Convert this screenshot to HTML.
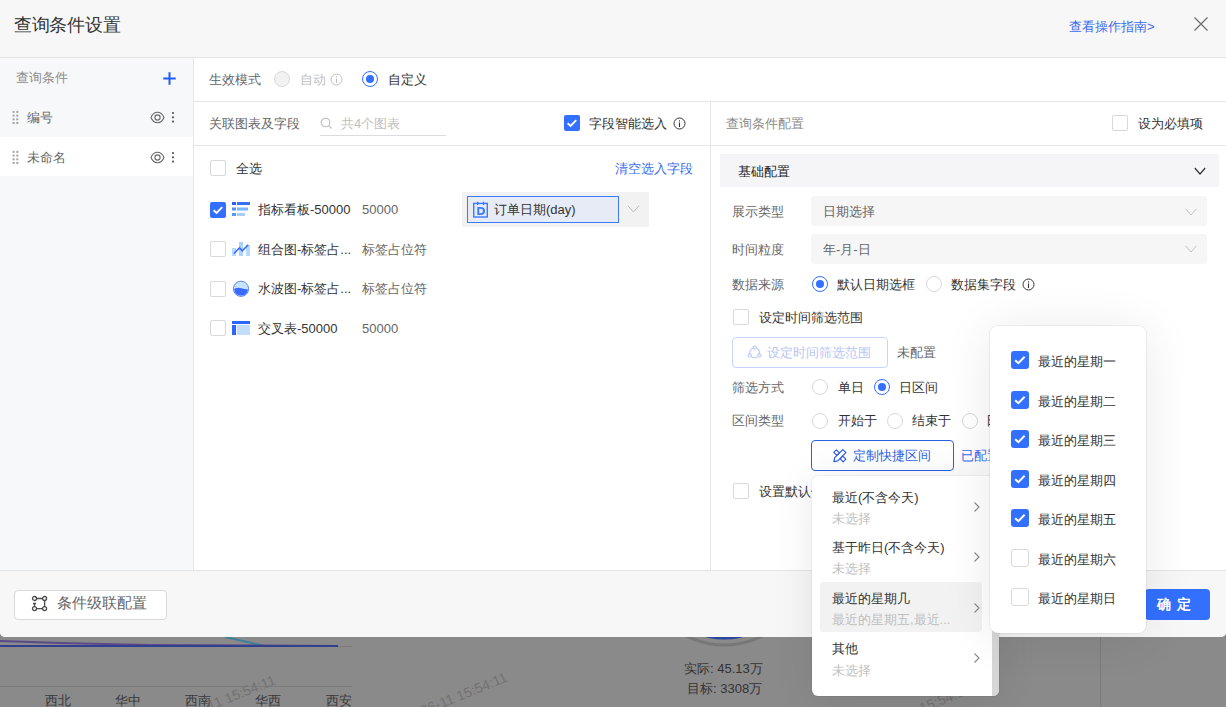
<!DOCTYPE html>
<html><head><meta charset="utf-8">
<style>
*{box-sizing:border-box;margin:0;padding:0}
html,body{width:1226px;height:707px;overflow:hidden;background:#8a8a8a;font-family:"Liberation Sans",sans-serif;font-size:13px;color:#333}
.a{position:absolute}
.t{position:absolute;white-space:nowrap;line-height:20px;height:20px;margin-top:1px}
#modal{position:absolute;left:0;top:0;width:1226px;height:637px;background:#fff;border-radius:0 0 5px 5px;overflow:hidden}
#hdr{position:absolute;left:0;top:0;width:1226px;height:58px;background:#f7f7f7;border-bottom:1px solid #e3e3e3}
#side{position:absolute;left:0;top:58px;width:194px;height:512px;background:#f7f8fa;border-right:1px solid #e6e6e6}
#footer{position:absolute;left:0;top:570px;width:1226px;height:67px;background:#f7f7f7;border-top:1px solid #e3e3e3}
.hl{position:absolute;height:1px;background:#e6e6e6}
.vl{position:absolute;width:1px;background:#e6e6e6}
.cb{position:absolute;width:16px;height:16px;border:1px solid #d9d9d9;border-radius:2px;background:#fff}
.cbc{position:absolute;width:16px;height:16px;border-radius:2px;background:#3370ff}
.cbc svg{position:absolute;left:0;top:0}
.rd{position:absolute;width:16px;height:16px;border:1px solid #d9d9d9;border-radius:50%;background:#fff}
.rdc{position:absolute;width:16px;height:16px;border:1px solid #3370ff;border-radius:50%;background:#fff}
.rdc:after{content:"";position:absolute;left:3px;top:3px;width:8px;height:8px;border-radius:50%;background:#3370ff}
.sel{position:absolute;background:#f6f6f6;border-radius:3px;height:30px}
.dk{color:#333}
.wm{color:#727272;font-size:14px;transform:rotate(-22deg);transform-origin:0 50%}
.gr{color:#999}
.md{color:#666}
</style></head><body>
<!-- background chart under overlay -->
<div class="a" style="left:0;top:636px;width:1226px;height:71px;background:#8a8a8a">
  
  <div class="a" style="left:1100px;top:0;width:1px;height:71px;background:#7a7a7a"></div>
  <div class="a" style="left:0;top:50px;width:352px;height:1px;background:#7c7c7c"></div>
  <svg class="a" style="left:0;top:1px" width="360" height="20" viewBox="0 0 360 20">
    <path d="M0 9.5 L352 9.5" stroke="#7a7a7a" stroke-width="1" fill="none"/>
    <path d="M225 0 L265 9" stroke="#3f7f9a" stroke-width="2" fill="none"/>
    <path d="M0 4 L60 6 L150 8 L338 9" stroke="#5a4a8a" stroke-width="2" fill="none"/>
    <path d="M0 9 L338 9" stroke="#323f8f" stroke-width="2" fill="none"/>
  </svg>
  <div class="t" style="left:45px;top:54px;color:#3a3a3a;font-size:13px">西北</div>
  <div class="t" style="left:115px;top:54px;color:#3a3a3a;font-size:13px">华中</div>
  <div class="t" style="left:185px;top:54px;color:#3a3a3a;font-size:13px">西南</div>
  <div class="t" style="left:255px;top:54px;color:#3a3a3a;font-size:13px">华西</div>
  <div class="t" style="left:326px;top:54px;color:#3a3a3a;font-size:13px">西安</div>
  <div class="t wm" style="left:208px;top:59px">11 15:54:11</div>
  <div class="t wm" style="left:421px;top:64px">26-11 15:54:11</div>
  <div class="t wm" style="left:884px;top:76px">26-11 15:54:11</div>
  <svg class="a" style="left:624px;top:0" width="200" height="12" viewBox="624 636 200 12"><circle cx="724.3" cy="561" r="84" stroke="#777" stroke-width="3" fill="none"/><circle cx="724.3" cy="561" r="78.5" fill="#2a479c"/></svg>
  <div class="t" style="left:684px;top:22px;color:#333;font-size:13px">实际: 45.13万</div>
  <div class="t" style="left:687px;top:42px;color:#333;font-size:13px">目标: 3308万</div>
</div>

<div id="modal">
  <div id="hdr">
    <div class="t" style="margin-top:0;left:14px;top:14px;font-size:18px;letter-spacing:-0.3px;line-height:22px;height:22px;color:#333">查询条件设置</div>
    <div class="t" style="left:1069px;top:16px;color:#3d6bf0">查看操作指南&gt;</div>
    <svg class="a" style="left:1193px;top:16px" width="16" height="16" viewBox="0 0 16 16"><path d="M1.5 1.5L14.5 14.5M14.5 1.5L1.5 14.5" stroke="#707070" stroke-width="1.3" fill="none"/></svg>
  </div>
  <div id="side">
    <div class="t gr" style="left:16px;top:9px;color:#8c8c8c">查询条件</div>
    <svg class="a" style="left:163px;top:14px" width="13" height="13" viewBox="0 0 13 13"><path d="M6.5 0.3V12.7M0.3 6.5H12.7" stroke="#1f5cff" stroke-width="2" fill="none"/></svg>
    <div class="a" style="left:0;top:79px;width:193px;height:39px;background:#fff"></div>
    <!-- row 1 -->
    <svg class="a" style="left:12px;top:52px" width="8" height="14" viewBox="0 0 8 14"><g fill="#a3a3a3"><rect x="0.6" y="0.9" width="2" height="2"/><rect x="4.3" y="0.9" width="2" height="2"/><rect x="0.6" y="4.6" width="2" height="2"/><rect x="4.3" y="4.6" width="2" height="2"/><rect x="0.6" y="8.3" width="2" height="2"/><rect x="4.3" y="8.3" width="2" height="2"/><rect x="0.6" y="12" width="2" height="2"/><rect x="4.3" y="12" width="2" height="2"/></g></svg>
    <div class="t md" style="left:27px;top:49px">编号</div>
    <svg class="a" style="left:150px;top:53px" width="15" height="13" viewBox="0 0 15 13"><path d="M1 6.5 C3.8 -0.5 11.2 -0.5 14 6.5 C11.2 13.5 3.8 13.5 1 6.5Z" stroke="#666" stroke-width="1.1" fill="none"/><circle cx="7.5" cy="6.5" r="2.6" stroke="#666" stroke-width="1.1" fill="none"/></svg>
    <svg class="a" style="left:171px;top:53px" width="4" height="12" viewBox="0 0 4 12"><g fill="#555"><circle cx="2" cy="2" r="1.1"/><circle cx="2" cy="6.3" r="1.1"/><circle cx="2" cy="10.6" r="1.1"/></g></svg>
    <!-- row 2 -->
    <svg class="a" style="left:12px;top:92px" width="8" height="14" viewBox="0 0 8 14"><g fill="#a3a3a3"><rect x="0.6" y="0.9" width="2" height="2"/><rect x="4.3" y="0.9" width="2" height="2"/><rect x="0.6" y="4.6" width="2" height="2"/><rect x="4.3" y="4.6" width="2" height="2"/><rect x="0.6" y="8.3" width="2" height="2"/><rect x="4.3" y="8.3" width="2" height="2"/><rect x="0.6" y="12" width="2" height="2"/><rect x="4.3" y="12" width="2" height="2"/></g></svg>
    <div class="t md" style="left:27px;top:89px">未命名</div>
    <svg class="a" style="left:150px;top:93px" width="15" height="13" viewBox="0 0 15 13"><path d="M1 6.5 C3.8 -0.5 11.2 -0.5 14 6.5 C11.2 13.5 3.8 13.5 1 6.5Z" stroke="#666" stroke-width="1.1" fill="none"/><circle cx="7.5" cy="6.5" r="2.6" stroke="#666" stroke-width="1.1" fill="none"/></svg>
    <svg class="a" style="left:171px;top:93px" width="4" height="12" viewBox="0 0 4 12"><g fill="#555"><circle cx="2" cy="2" r="1.1"/><circle cx="2" cy="6.3" r="1.1"/><circle cx="2" cy="10.6" r="1.1"/></g></svg>
  </div>

  <!-- top row -->
  <div class="t md" style="left:209px;top:69px">生效模式</div>
  <div class="rd" style="left:274px;top:71px;background:#f2f2f2"></div>
  <div class="t" style="left:300px;top:69px;color:#bfbfbf">自动</div>
  <svg class="a" style="left:330px;top:73px" width="13" height="13" viewBox="0 0 13 13"><circle cx="6.5" cy="6.5" r="5.5" stroke="#bfbfbf" stroke-width="1" fill="none"/><path d="M6.5 5.5V10M6.5 3.2V4.4" stroke="#bfbfbf" stroke-width="1.1"/></svg>
  <div class="rdc" style="left:362px;top:71px"></div>
  <div class="t dk" style="left:388px;top:69px">自定义</div>
  <div class="hl" style="left:194px;top:101px;width:1032px"></div>

  <!-- left panel -->
  <div class="t md" style="left:209px;top:113px">关联图表及字段</div>
  <svg class="a" style="left:320px;top:117px" width="13" height="13" viewBox="0 0 13 13"><circle cx="5.5" cy="5.5" r="4.3" stroke="#bbb" stroke-width="1.1" fill="none"/><path d="M8.7 8.7L11.5 11.5" stroke="#bbb" stroke-width="1.1"/></svg>
  <div class="t" style="left:341px;top:113px;color:#bfbfbf">共4个图表</div>
  <div class="hl" style="left:320px;top:135px;width:126px;background:#dcdcdc"></div>
  <div class="cbc" style="left:564px;top:115px"><svg width="16" height="16" viewBox="0 0 16 16"><path d="M3.6 8.2L6.6 11L12.2 5.2" stroke="#fff" stroke-width="1.9" fill="none"/></svg></div>
  <div class="t dk" style="left:589px;top:113px">字段智能选入</div>
  <svg class="a" style="left:673px;top:117px" width="13" height="13" viewBox="0 0 13 13"><circle cx="6.5" cy="6.5" r="5.5" stroke="#333" stroke-width="1" fill="none"/><path d="M6.5 5.5V10M6.5 3.2V4.4" stroke="#333" stroke-width="1.1"/></svg>
  <div class="hl" style="left:194px;top:145px;width:1032px"></div>
  <div class="vl" style="left:710px;top:102px;height:468px"></div>

  <div class="cb" style="left:210px;top:160px"></div>
  <div class="t dk" style="left:236px;top:158px">全选</div>
  <div class="t" style="left:615px;top:158px;color:#3d6bf0">清空选入字段</div>

  <!-- item 1 -->
  <div class="cbc" style="left:210px;top:202px"><svg width="16" height="16" viewBox="0 0 16 16"><path d="M3.6 8.2L6.6 11L12.2 5.2" stroke="#fff" stroke-width="1.9" fill="none"/></svg></div>
  <svg class="a" style="left:232px;top:202px" width="18" height="14" viewBox="0 0 18 14"><rect x="0" y="0" width="4" height="3" fill="#2f5cf5"/><rect x="5" y="0" width="13" height="3" fill="#3a6ff7"/><rect x="0" y="5.5" width="4" height="3" fill="#5a8cf7"/><rect x="5" y="5.5" width="11" height="3" fill="#78b4ff"/><rect x="0" y="11" width="4" height="3" fill="#4d9bff"/><rect x="5" y="11" width="8" height="3" fill="#a9cdfb"/></svg>
  <div class="t dk" style="left:258px;top:199px">指标看板-50000</div>
  <div class="t md" style="left:362px;top:199px">50000</div>
  <div class="a" style="left:462px;top:192px;width:187px;height:35px;background:#f2f2f2"></div>
  <div class="a" style="left:467px;top:196px;width:152px;height:27px;background:#e6ebf6;border:1px solid #3c7bff"></div>
  <svg class="a" style="left:472px;top:201px" width="17" height="17" viewBox="0 0 17 17"><rect x="1.7" y="2.4" width="13.6" height="13.6" stroke="#3c7bff" stroke-width="1.4" fill="none"/><path d="M5.7 0.8V4M11.5 0.8V4" stroke="#3c7bff" stroke-width="1.4"/><path fill="#3c7bff" fill-rule="evenodd" d="M5.3 6H8.6Q13 6 13 10Q13 14 8.6 14H5.3ZM7.2 7.7V12.3H8.5Q11 12.3 11 10Q11 7.7 8.5 7.7Z"/></svg>
  <div class="t dk" style="left:494px;top:199px">订单日期(day)</div>
  <svg class="a" style="left:627px;top:204px" width="13" height="10" viewBox="0 0 13 10"><path d="M1 1.8L6.5 8L12 1.8" stroke="#bbb" stroke-width="1" fill="none"/></svg>

  <!-- item 2 -->
  <div class="cb" style="left:210px;top:241px"></div>
  <svg class="a" style="left:232px;top:242px" width="18" height="14" viewBox="0 0 18 14"><rect x="0" y="6" width="4" height="8" fill="#b3dbff"/><rect x="7" y="0" width="4" height="14" fill="#abd3ff"/><rect x="14" y="3" width="4" height="11" fill="#b3dbff"/><path d="M2 11.5L7.5 6L10.3 8.8L16.2 2.8" stroke="#3a6bff" stroke-width="1.6" fill="none"/></svg>
  <div class="t dk" style="left:258px;top:239px">组合图-标签占...</div>
  <div class="t md" style="left:362px;top:239px">标签占位符</div>

  <!-- item 3 -->
  <div class="cb" style="left:210px;top:281px"></div>
  <svg class="a" style="left:232px;top:280px" width="18" height="18" viewBox="0 0 18 18"><circle cx="9" cy="8.8" r="7.6" fill="#c9e2ff" stroke="#5b87ff" stroke-width="1"/><path d="M2.2 8.8 Q6 7.2 9.5 8.3 Q13 9.4 15.8 9.2 Q15.6 15.4 9 15.6 Q2.4 15.4 2.2 8.8Z" fill="#3a6bff"/></svg>
  <div class="t dk" style="left:258px;top:278px">水波图-标签占...</div>
  <div class="t md" style="left:362px;top:278px">标签占位符</div>

  <!-- item 4 -->
  <div class="cb" style="left:210px;top:320px"></div>
  <svg class="a" style="left:232px;top:321px" width="18" height="14" viewBox="0 0 18 14"><rect x="0" y="0" width="18" height="3" fill="#2a66ff"/><rect x="0" y="4" width="4" height="10" fill="#2a66ff"/><rect x="5" y="4" width="13" height="10" fill="#c2dcfd"/></svg>
  <div class="t dk" style="left:258px;top:318px">交叉表-50000</div>
  <div class="t md" style="left:362px;top:318px">50000</div>

  <!-- right panel -->
  <div class="t" style="left:726px;top:113px;color:#8c8c8c">查询条件配置</div>
  <div class="cb" style="left:1112px;top:115px"></div>
  <div class="t dk" style="left:1138px;top:113px">设为必填项</div>

  <div class="a" style="left:720px;top:154px;width:499px;height:33px;background:#f5f5f7"></div>
  <div class="t" style="left:738px;top:161px;color:#222">基础配置</div>
  <svg class="a" style="left:1194px;top:167px" width="12" height="9" viewBox="0 0 12 9"><path d="M0.8 1L6 7L11.2 1" stroke="#333" stroke-width="1.2" fill="none"/></svg>

  <div class="t md" style="left:732px;top:201px">展示类型</div>
  <div class="sel" style="left:811px;top:196px;width:396px"></div>
  <div class="t md" style="left:823px;top:201px">日期选择</div>
  <svg class="a" style="left:1185px;top:208px" width="12" height="9" viewBox="0 0 12 9"><path d="M0.6 0.8L6 7L11.4 0.8" stroke="#c0c0c0" stroke-width="1" fill="none"/></svg>

  <div class="t md" style="left:732px;top:239px">时间粒度</div>
  <div class="sel" style="left:811px;top:234px;width:396px"></div>
  <div class="t md" style="left:823px;top:239px">年-月-日</div>
  <svg class="a" style="left:1185px;top:245px" width="12" height="9" viewBox="0 0 12 9"><path d="M0.6 0.8L6 7L11.4 0.8" stroke="#c0c0c0" stroke-width="1" fill="none"/></svg>

  <div class="t md" style="left:732px;top:274px">数据来源</div>
  <div class="rdc" style="left:812px;top:276px"></div>
  <div class="t dk" style="left:837px;top:274px">默认日期选框</div>
  <div class="rd" style="left:926px;top:276px"></div>
  <div class="t dk" style="left:951px;top:274px">数据集字段</div>
  <svg class="a" style="left:1022px;top:278px" width="13" height="13" viewBox="0 0 13 13"><circle cx="6.5" cy="6.5" r="5.5" stroke="#333" stroke-width="1" fill="none"/><path d="M6.5 5.5V10M6.5 3.2V4.4" stroke="#333" stroke-width="1.1"/></svg>

  <div class="cb" style="left:733px;top:309px"></div>
  <div class="t dk" style="left:759px;top:307px">设定时间筛选范围</div>

  <div class="a" style="left:732px;top:337px;width:156px;height:31px;border:1px solid #c6d6fa;border-radius:4px;background:#fff"></div>
  <svg class="a" style="left:747px;top:345px" width="15" height="15" viewBox="0 0 15 15"><g stroke="#b8c9f5" stroke-width="1.1" fill="none"><path d="M5.9 2.9 A5 5 0 0 0 3.2 9.6"/><path d="M9.3 2.9 A5 5 0 0 1 12 9.6"/><path d="M4.6 11.6 A5 5 0 0 0 10.6 11.6"/><circle cx="7.6" cy="2.6" r="1.6"/><circle cx="2.8" cy="10.4" r="1.6"/><circle cx="12.4" cy="10.4" r="1.6"/></g></svg>
  <div class="t" style="left:767px;top:342px;color:#b5c6f3">设定时间筛选范围</div>
  <div class="t md" style="left:897px;top:342px">未配置</div>

  <div class="t md" style="left:732px;top:377px">筛选方式</div>
  <div class="rd" style="left:812px;top:379px"></div>
  <div class="t dk" style="left:838px;top:377px">单日</div>
  <div class="rdc" style="left:874px;top:379px"></div>
  <div class="t dk" style="left:899px;top:377px">日区间</div>

  <div class="t md" style="left:732px;top:410px">区间类型</div>
  <div class="rd" style="left:812px;top:413px"></div>
  <div class="t dk" style="left:838px;top:410px">开始于</div>
  <div class="rd" style="left:887px;top:413px"></div>
  <div class="t dk" style="left:912px;top:410px">结束于</div>
  <div class="rd" style="left:962px;top:413px"></div>
  <div class="t dk" style="left:986px;top:410px">日</div>

  <div class="a" style="left:811px;top:440px;width:143px;height:31px;border:1px solid #2d5fe0;border-radius:4px;background:#fff"></div>
  <svg class="a" style="left:833px;top:449px" width="14" height="14" viewBox="0 0 14 14"><g stroke="#2d5fe0" stroke-width="1.2" fill="none" stroke-linejoin="round"><path d="M0.8 3.4L3.4 0.8L6.4 3.8L3.8 6.4Z"/><path d="M7.2 9.8L9.8 7.2L12.8 10.2L10.2 12.8Z"/><path d="M9.8 0.6L12.9 3.7L4.8 11.8L0.9 12.6L1.7 8.7Z"/></g></svg>
  <div class="t" style="left:853px;top:445px;color:#2d5fe0">定制快捷区间</div>
  <div class="t" style="left:961px;top:445px;color:#3d6bf0">已配置</div>

  <div class="cb" style="left:733px;top:483px"></div>
  <div class="t dk" style="left:759px;top:481px">设置默认值</div>

  <div id="footer">
    <div class="a" style="left:14px;top:19px;width:153px;height:30px;border:1px solid #d9d9d9;border-radius:4px;background:#fff"></div>
    <svg class="a" style="left:31px;top:24px" width="17" height="17" viewBox="0 0 17 17"><g stroke="#4a4a4a" stroke-width="1.3" fill="none"><circle cx="3.5" cy="3.5" r="2"/><circle cx="13.6" cy="3.5" r="2"/><circle cx="3.5" cy="13.6" r="2"/><circle cx="13.6" cy="13.6" r="2"/><path d="M5.5 3.5H11.6M13.6 5.5V11.6M5.5 13.6H11.6M3.5 8.5V11.6M2 8.5H5"/></g></svg>
    <div class="t md" style="left:57px;top:19px;font-size:15.3px;line-height:24px;height:24px">条件级联配置</div>
    <div class="a" style="left:1145px;top:18px;width:65px;height:31px;border-radius:4px;background:#3370ff"></div>
    <div class="t" style="left:1157px;top:22px;color:#fff;font-size:14px;font-weight:bold;letter-spacing:6px">确定</div>
  </div>
</div>

<!-- popover 1 -->
<div class="a" style="left:812px;top:476px;width:187px;height:220px;background:#fff;border-radius:6px;box-shadow:0 0 0 1px rgba(0,0,0,0.04),0 4px 40px rgba(0,0,0,0.09);overflow:hidden">
  <div class="a" style="left:180px;top:0;width:7px;height:220px;background:#d6d6d6"></div>
  <div class="a" style="left:8px;top:106px;width:162px;height:50px;background:#f2f2f2;border-radius:3px"></div>
  <div class="t dk" style="left:20px;top:11px">最近(不含今天)</div>
  <div class="t" style="left:20px;top:32px;color:#bfbfbf">未选择</div>
  <div class="t dk" style="left:20px;top:61px">基于昨日(不含今天)</div>
  <div class="t" style="left:20px;top:82px;color:#bfbfbf">未选择</div>
  <div class="t dk" style="left:20px;top:112px">最近的星期几</div>
  <div class="t" style="left:20px;top:133px;color:#bfbfbf">最近的星期五,最近...</div>
  <div class="t dk" style="left:20px;top:162px">其他</div>
  <div class="t" style="left:20px;top:184px;color:#bfbfbf">未选择</div>
  <svg class="a" style="left:161px;top:25px" width="8" height="12" viewBox="0 0 8 12"><path d="M1.5 1.5L6 6L1.5 10.5" stroke="#888" stroke-width="1.1" fill="none"/></svg>
  <svg class="a" style="left:161px;top:75px" width="8" height="12" viewBox="0 0 8 12"><path d="M1.5 1.5L6 6L1.5 10.5" stroke="#888" stroke-width="1.1" fill="none"/></svg>
  <svg class="a" style="left:161px;top:126px" width="8" height="12" viewBox="0 0 8 12"><path d="M1.5 1.5L6 6L1.5 10.5" stroke="#888" stroke-width="1.1" fill="none"/></svg>
  <svg class="a" style="left:161px;top:176px" width="8" height="12" viewBox="0 0 8 12"><path d="M1.5 1.5L6 6L1.5 10.5" stroke="#888" stroke-width="1.1" fill="none"/></svg>
</div>

<!-- popover 2 -->
<div class="a" style="left:990px;top:326px;width:156px;height:307px;background:#fff;border-radius:8px;box-shadow:0 0 0 1px rgba(0,0,0,0.05),0 4px 50px rgba(0,0,0,0.09)">
  <div class="cbc" style="left:21px;top:25px;width:18px;height:18px;border-radius:3px"><svg width="18" height="18" viewBox="0 0 18 18"><path d="M4.2 9.2L7.4 12.2L13.6 5.8" stroke="#fff" stroke-width="2" fill="none"/></svg></div>
  <div class="t dk" style="left:48px;top:25px">最近的星期一</div>
  <div class="cbc" style="left:21px;top:65px;width:18px;height:18px;border-radius:3px"><svg width="18" height="18" viewBox="0 0 18 18"><path d="M4.2 9.2L7.4 12.2L13.6 5.8" stroke="#fff" stroke-width="2" fill="none"/></svg></div>
  <div class="t dk" style="left:48px;top:65px">最近的星期二</div>
  <div class="cbc" style="left:21px;top:104px;width:18px;height:18px;border-radius:3px"><svg width="18" height="18" viewBox="0 0 18 18"><path d="M4.2 9.2L7.4 12.2L13.6 5.8" stroke="#fff" stroke-width="2" fill="none"/></svg></div>
  <div class="t dk" style="left:48px;top:104px">最近的星期三</div>
  <div class="cbc" style="left:21px;top:144px;width:18px;height:18px;border-radius:3px"><svg width="18" height="18" viewBox="0 0 18 18"><path d="M4.2 9.2L7.4 12.2L13.6 5.8" stroke="#fff" stroke-width="2" fill="none"/></svg></div>
  <div class="t dk" style="left:48px;top:144px">最近的星期四</div>
  <div class="cbc" style="left:21px;top:183px;width:18px;height:18px;border-radius:3px"><svg width="18" height="18" viewBox="0 0 18 18"><path d="M4.2 9.2L7.4 12.2L13.6 5.8" stroke="#fff" stroke-width="2" fill="none"/></svg></div>
  <div class="t dk" style="left:48px;top:183px">最近的星期五</div>
  <div class="cb" style="left:21px;top:223px;width:18px;height:18px;border-radius:3px"></div>
  <div class="t dk" style="left:48px;top:223px">最近的星期六</div>
  <div class="cb" style="left:21px;top:262px;width:18px;height:18px;border-radius:3px"></div>
  <div class="t dk" style="left:48px;top:262px">最近的星期日</div>
</div>
</body></html>
